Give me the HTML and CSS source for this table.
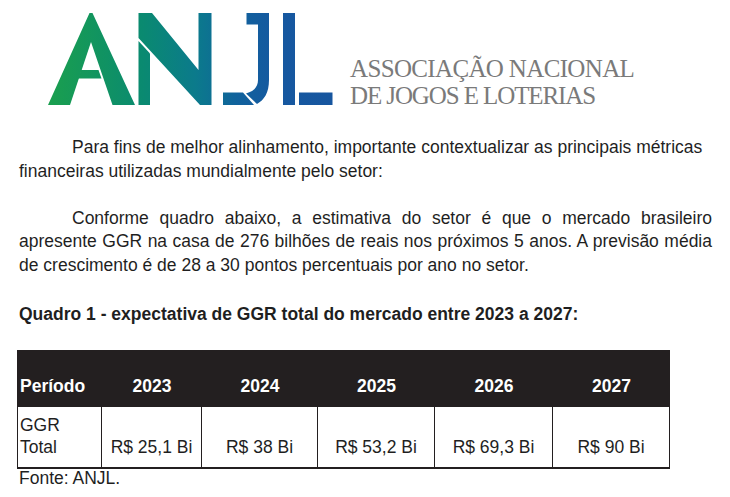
FILE: index.html
```html
<!DOCTYPE html>
<html lang="pt-BR">
<head>
<meta charset="utf-8">
<title>ANJL - Quadro 1</title>
<link rel="stylesheet" href="styles.css">
</head>
<body>
<header class="logo">
  <svg class="mark" viewBox="0 0 340 120" width="340" height="120" aria-label="ANJL">
    <defs>
      <linearGradient id="anjl" gradientUnits="userSpaceOnUse" x1="48" y1="0" x2="333" y2="0">
        <stop offset="0" stop-color="#1a9f4e"/>
        <stop offset="0.33" stop-color="#0a8a70"/>
        <stop offset="0.52" stop-color="#0b7a8c"/>
        <stop offset="0.66" stop-color="#10629c"/>
        <stop offset="0.8" stop-color="#1658a0"/>
        <stop offset="1" stop-color="#17569f"/>
      </linearGradient>
    </defs>
    <g fill="url(#anjl)">
      <path d="M89.5 13 L92.5 13 L135 105 L112.5 105 L91 42 L70 105 L48 105 Z"/>
      <path d="M81 70 L98.5 70 L101.5 78.5 L78 78.5 Z"/>
      <path d="M138.5 41 L150 53.5 L150 105 L138.5 105 Z"/>
      <path d="M138.5 13 L152 13 L198.5 70 L198.5 13 L211.5 13 L211.5 105 L200 105 L138.5 38 Z"/>
      <path d="M246.5 13 L269 13 L269 80 C269 93 264 100 257 104 L246 93.5 C254 91 258 87 258 80 L258 24.5 L246.5 24.5 Z"/>
      <path d="M223 92.5 L243 92.5 L254 105 L223 105 Z"/>
      <path d="M283 13 L295 13 L295 105 L283 105 Z"/>
      <path d="M299 92.5 L332.5 92.5 L332.5 105 L299 105 Z"/>
    </g>
  </svg>
  <div class="logo-text">
    <div class="lt1">ASSOCIAÇÃO NACIONAL</div>
    <div class="lt2">DE JOGOS E LOTERIAS</div>
  </div>
</header>
<main class="doc">
  <p class="para">
    <span class="line first">Para fins de melhor alinhamento, importante contextualizar as principais métricas</span>
    <span class="line">financeiras utilizadas mundialmente pelo setor:</span>
  </p>
  <p class="para para-last">
    <span class="line first just">Conforme quadro abaixo, a estimativa do setor é que o mercado brasileiro</span>
    <span class="line just">apresente GGR na casa de 276 bilhões de reais nos próximos 5 anos. A previsão média</span>
    <span class="line">de crescimento é de 28 a 30 pontos percentuais por ano no setor.</span>
  </p>
  <p class="title">Quadro 1 - expectativa de GGR total do mercado entre 2023 a 2027:</p>
  <div class="table">
    <div class="row head">
      <div class="cell label">Período</div>
      <div class="cell">2023</div>
      <div class="cell">2024</div>
      <div class="cell">2025</div>
      <div class="cell">2026</div>
      <div class="cell">2027</div>
    </div>
    <div class="row body">
      <div class="cell label"><span>GGR</span><span>Total</span></div>
      <div class="cell">R$ 25,1 Bi</div>
      <div class="cell">R$ 38 Bi</div>
      <div class="cell">R$ 53,2 Bi</div>
      <div class="cell">R$ 69,3 Bi</div>
      <div class="cell">R$ 90 Bi</div>
    </div>
  </div>
  <p class="source">Fonte: ANJL.</p>
</main>
</body>
</html>
```
FILE: styles.css
```css
html, body {
  margin: 0;
  padding: 0;
  background: #ffffff;
}

body {
  font-family: "Liberation Sans", Arial, sans-serif;
  color: #1f1f1f;
}

.logo {
  display: flex;
  height: 136px;
}

.mark {
  display: block;
  flex: none;
  width: 340px;
  height: 120px;
}

.logo-text {
  margin-left: 10px;
  padding-top: 55px;
  font-family: "Liberation Serif", "Times New Roman", serif;
  font-size: 25px;
  line-height: 27px;
  color: #7a7a7a;
  white-space: nowrap;
}

.lt1 {
  letter-spacing: -0.65px;
}

.lt2 {
  letter-spacing: -1.1px;
}

.doc {
  padding-left: 19px;
  width: 693px;
  font-size: 17.5px;
  line-height: 23.6px;
}

.para {
  margin: 0 0 23.6px;
}

.para-last {
  margin-bottom: 25.6px;
}

.line {
  display: block;
  white-space: nowrap;
}

.line.just {
  white-space: normal;
  text-align: justify;
  text-align-last: justify;
}

.first {
  text-indent: 53px;
}

.title {
  margin: 0 0 23.2px;
  font-weight: bold;
}

.table {
  margin-left: -2px;
  width: 653px;
}

.row {
  display: grid;
  grid-template-columns: 85px 100px 116px 117px 118px 117px;
}

.head {
  height: 57px;
  background: #231f20;
  color: #ffffff;
  font-weight: bold;
  align-items: end;
}

.head .cell {
  padding-bottom: 9.5px;
  line-height: 21.5px;
  text-align: center;
}

.head .cell.label {
  text-align: left;
  padding-left: 3px;
}

.body .cell {
  box-sizing: border-box;
  height: 62px;
  display: flex;
  flex-direction: column;
  justify-content: flex-end;
  align-items: center;
  padding-bottom: 8.3px;
  line-height: 21.6px;
  border-right: 1px solid #231f20;
  border-bottom: 2px solid #231f20;
}

.body .cell.label {
  align-items: flex-start;
  padding-left: 2px;
  border-left: 1px solid #231f20;
}

.source {
  margin: 0;
  line-height: 18px;
}
```
